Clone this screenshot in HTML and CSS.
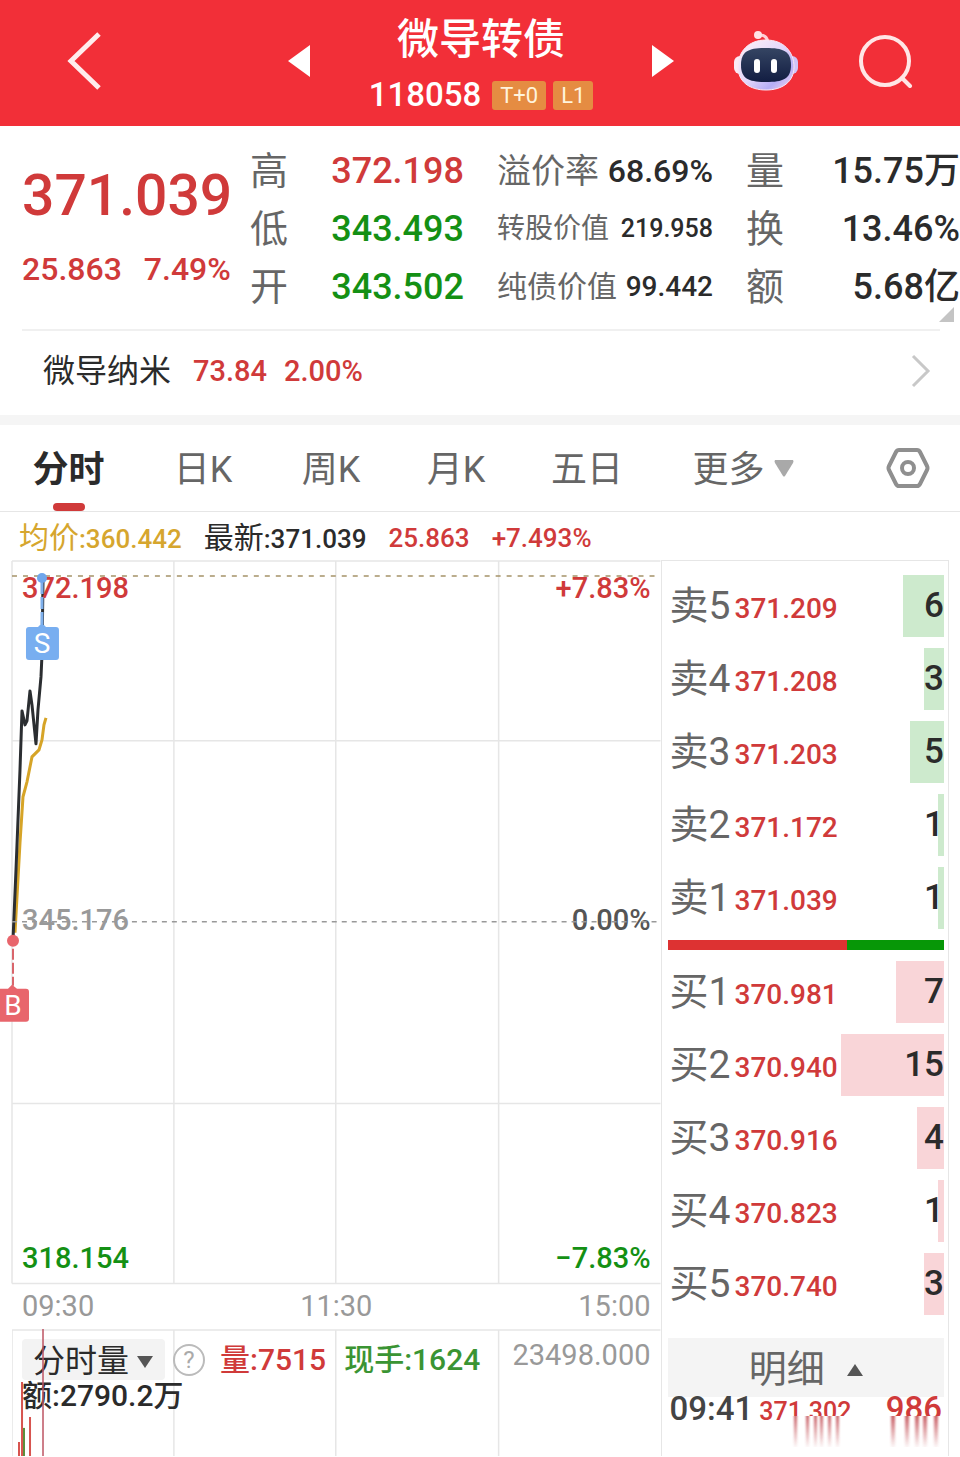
FILE: index.html
```
<!DOCTYPE html>
<html lang="zh-CN">
<head>
  <meta charset="UTF-8" />
  <meta name="viewport" content="width=device-width, initial-scale=1.0"/>
  <title>微导转债 118058</title>
  <link rel="stylesheet" href="styles.css">
</head>
<body>
  <header class="topbar">
    <button class="icon-btn" aria-label="返回">
      <svg width="34" height="60" viewBox="0 0 34 60"><path d="M32 3L4 30L32 57" fill="none" stroke="#ffeded" stroke-width="5"/></svg>
    </button>
    <button class="icon-btn prev" aria-label="上一只">
      <svg width="22" height="32" viewBox="0 0 22 32"><path d="M22 0V32L0 16Z" fill="#fff"/></svg>
    </button>
    <div class="title">
      <h1>微导转债</h1>
      <div class="code">118058 <span class="badge">T+0</span><span class="badge">L1</span></div>
    </div>
    <button class="icon-btn next" aria-label="下一只">
      <svg width="22" height="32" viewBox="0 0 22 32"><path d="M0 0V32L22 16Z" fill="#fff"/></svg>
    </button>
    <button class="icon-btn" aria-label="智能助手">
      <svg width="66" height="62" viewBox="0 0 66 62">
        <defs>
          <linearGradient id="helmet" x1="0" y1="0" x2="1" y2="1">
            <stop offset="0" stop-color="#fff3f6"/>
            <stop offset=".5" stop-color="#e2d5fb"/>
            <stop offset=".75" stop-color="#b5adf5"/>
            <stop offset="1" stop-color="#fbdcee"/>
          </linearGradient>
          <linearGradient id="visor" x1="0" y1="0" x2="0" y2="1">
            <stop offset="0" stop-color="#354563"/>
            <stop offset="1" stop-color="#121d42"/>
          </linearGradient>
        </defs>
        <path d="M25 5Q34 4 35 13" fill="none" stroke="#ffd0d6" stroke-width="3"/>
        <circle cx="25" cy="5" r="4" fill="#ffe3e6"/>
        <rect x="1" y="26" width="12" height="18" rx="6" fill="#fbe9f4"/>
        <rect x="53" y="26" width="12" height="18" rx="6" fill="#cfc4f8"/>
        <path d="M33 10C51 10 61 22 61 37C61 52 49 60 33 60C17 60 5 52 5 37C5 22 15 10 33 10Z" fill="url(#helmet)" stroke="#fbe6f2" stroke-width="1"/>
        <path d="M33 18C50 18 58 21 58 35C58 49 50 52 33 52C16 52 8 49 8 35C8 21 16 18 33 18Z" fill="url(#visor)"/>
        <rect x="21" y="29" width="6" height="14" rx="3" fill="#fff"/>
        <rect x="38" y="29" width="6" height="14" rx="3" fill="#fff"/>
      </svg>
    </button>
    <button class="icon-btn" aria-label="搜索">
      <svg width="54" height="54" viewBox="0 0 54 54"><g fill="none" stroke="#ffe6e6" stroke-width="4" stroke-linecap="round"><circle cx="26" cy="27" r="24"/><path d="M43 44L51 52"/></g></svg>
    </button>
  </header>

  <section class="summary">
    <div class="last">
      <div class="price">371.039</div>
      <div class="change"><span>25.863</span><span>7.49%</span></div>
    </div>
    <dl class="stats">
      <div><dt>高</dt><dd class="red">372.198</dd></div>
      <div><dt>低</dt><dd class="green">343.493</dd></div>
      <div><dt>开</dt><dd class="green">343.502</dd></div>
    </dl>
    <dl class="stats bond">
      <div class="lg"><dt>溢价率</dt><dd>68.69%</dd></div>
      <div class="sm"><dt>转股价值</dt><dd>219.958</dd></div>
      <div class="md"><dt>纯债价值</dt><dd>99.442</dd></div>
    </dl>
    <dl class="stats">
      <div><dt>量</dt><dd>15.75万</dd></div>
      <div><dt>换</dt><dd>13.46%</dd></div>
      <div><dt>额</dt><dd>5.68亿</dd></div>
    </dl>
    <svg class="corner" width="15" height="15" viewBox="0 0 15 15"><path d="M15 0V15H0Z" fill="#c4c4c4"/></svg>
  </section>

  <a class="stock" href="#">
    <span class="stock-name">微导纳米</span>
    <span class="red">73.84</span>
    <span class="red">2.00%</span>
    <svg class="arrow" width="20" height="34" viewBox="0 0 20 34"><path d="M2 2L17 17L2 32" fill="none" stroke="#c8c8c8" stroke-width="3"/></svg>
  </a>

  <nav class="tabs">
    <button class="tab active">分时</button>
    <button class="tab">日K</button>
    <button class="tab">周K</button>
    <button class="tab">月K</button>
    <button class="tab">五日</button>
    <button class="tab">更多 <svg width="20" height="17" viewBox="0 0 20 17"><path d="M1 0H19Q20 1 19 3L11 16Q10 17 9 16L1 3Q0 1 1 0Z" fill="#a9a9a9"/></svg></button>
    <button class="tab setting" aria-label="设置">
      <svg width="44" height="42" viewBox="0 0 44 42"><g fill="none" stroke="#8f8f8f" stroke-width="4"><path d="M13 3H31Q33 3 34 5L41 19Q42 21 41 23L34 37Q33 39 31 39H13Q11 39 10 37L3 23Q2 21 3 19L10 5Q11 3 13 3Z"/><circle cx="22" cy="21" r="6"/></g></svg>
    </button>
  </nav>

  <div class="info">
    <span class="gold"><b>均价</b>:360.442</span>
    <span><b>最新</b>:371.039</span>
    <span class="red">25.863</span>
    <span class="red">+7.493%</span>
  </div>

  <main class="board">
    <div class="charts">
      <div class="chart">
        <svg class="plot" viewBox="0 0 649 725">
          <g fill="none" stroke="#e6e6e6" stroke-width="1.5">
            <path d="M0 1H649M0 181H649M0 544H649M0 724H649"/>
            <path d="M0 1V724M162 1V724M324 1V724M487 1V724"/>
          </g>
          <path d="M3 373L8 283L11 237L15 222L20 197L27 190L30 180L32 165L34 158" fill="none" stroke="#d6a427" stroke-width="3"/>
          <path d="M1 380L4 310L8 210L10 151L13 165L15 161L18 131L20 145L24 184L26 150L29 117L30 95L31 22" fill="none" stroke="#2b2e31" stroke-width="3" stroke-linejoin="round"/>
        </svg>
        <span class="mark top-left red">372.198</span>
        <span class="mark top-right red">+7.83%</span>
        <span class="mark mid-left">345.176</span>
        <span class="mark mid-right">0.00%</span>
        <span class="mark bottom-left green">318.154</span>
        <span class="mark bottom-right green">−7.83%</span>
        <svg class="plot over" viewBox="0 0 649 725">
          <path d="M0 16H649" stroke="#a59368" stroke-width="1.5" stroke-dasharray="5 6"/>
          <path d="M0 362H649" stroke="#999" stroke-width="1.5" stroke-dasharray="5 5"/>
          <path d="M30 22V64" stroke="#7fb0ec" stroke-width="3" stroke-dasharray="12 3"/>
          <circle cx="30" cy="18" r="5" fill="#6ea6ec"/>
          <path d="M26 67L30 63L34 67H44Q47 67 47 70V97Q47 100 44 100H17Q14 100 14 97V70Q14 67 17 67Z" fill="#78aef0"/>
          <text class="flag" x="30" y="93">S</text>
          <path d="M1 389V426" stroke="#d9656b" stroke-width="2" stroke-dasharray="11 3"/>
          <circle cx="1" cy="381" r="6" fill="#e8656c"/>
          <path d="M-4 429L0 425L5 429H14Q17 429 17 432V459Q17 462 14 462H-12V429Z" fill="#e8656c"/>
          <text class="flag" x="1" y="455">B</text>
        </svg>
      </div>
      <div class="axis"><span>09:30</span><span>11:30</span><span>15:00</span></div>
      <div class="volume">
        <svg class="vol-plot" viewBox="0 0 649 129">
          <path d="M0 1H649M0 1V129M162 1V129M324 1V129M487 1V129" fill="none" stroke="#e6e6e6" stroke-width="1.5"/>
          <path d="M10 53V129M18 88V129M7 113V129" stroke="#d7544f" stroke-width="2"/>
          <path d="M12 99V129" stroke="#5b8f3d" stroke-width="2"/>
        </svg>
        <div class="vol-head">
          <button class="picker">分时量 <svg width="18" height="12" viewBox="0 0 18 12"><path d="M1 0H17L9 12Z" fill="#555"/></svg></button>
          <button class="help" aria-label="说明">?</button>
          <span class="red">量:7515</span>
          <span class="deal">现手:1624</span>
          <span class="max">23498.000</span>
        </div>
        <div class="amount">额:2790.2万</div>
        <svg class="vol-plot" viewBox="0 0 649 129"><path d="M31 0V129" stroke="#bd5463" stroke-width="1.5"/></svg>
      </div>
    </div>

    <aside class="depth">
      <table class="book sell">
        <tr><th>卖5</th><td>371.209</td><td class="qty"><span style="width: 41px">6</span></td></tr>
        <tr><th>卖4</th><td>371.208</td><td class="qty"><span style="width: 20px">3</span></td></tr>
        <tr><th>卖3</th><td>371.203</td><td class="qty"><span style="width: 34px">5</span></td></tr>
        <tr><th>卖2</th><td>371.172</td><td class="qty"><span style="width: 6px">1</span></td></tr>
        <tr><th>卖1</th><td>371.039</td><td class="qty"><span style="width: 6px">1</span></td></tr>
      </table>
      <div class="ratio"><div class="ratio-buy" style="width: 65%"></div></div>
      <table class="book buy">
        <tr><th>买1</th><td>370.981</td><td class="qty"><span style="width: 48px">7</span></td></tr>
        <tr><th>买2</th><td>370.940</td><td class="qty"><span style="width: 103px">15</span></td></tr>
        <tr><th>买3</th><td>370.916</td><td class="qty"><span style="width: 27px">4</span></td></tr>
        <tr><th>买4</th><td>370.823</td><td class="qty"><span style="width: 6px">1</span></td></tr>
        <tr><th>买5</th><td>370.740</td><td class="qty"><span style="width: 20px">3</span></td></tr>
      </table>
      <button class="detail">明细 <svg width="16" height="12" viewBox="0 0 16 12"><path d="M0 12H16L8 0Z" fill="#555"/></svg></button>
      <div class="tape">
        <span class="time">09:41</span><span class="deal-price">371.302</span><span class="deal-qty">986</span>
        <svg class="fade" width="158" height="38" viewBox="0 0 158 38">
          <defs>
            <linearGradient id="drip" x1="0" y1="0" x2="0" y2="1"><stop offset="0" stop-color="#c34f55" stop-opacity=".9"/><stop offset="1" stop-color="#c34f55" stop-opacity=".05"/></linearGradient>
            <filter id="soft"><feGaussianBlur stdDeviation="1 0"/></filter>
          </defs>
          <rect width="158" height="38" fill="#fff"/>
          <g fill="url(#drip)" filter="url(#soft)">
            <rect x="8" y="0" width="3" height="31"/><rect x="20" y="0" width="3" height="31"/><rect x="28" y="0" width="3" height="31"/><rect x="34" y="0" width="3" height="31"/><rect x="42" y="0" width="3" height="31"/><rect x="50" y="0" width="3" height="31"/>
            <rect x="105" y="0" width="4" height="31"/><rect x="119" y="0" width="4" height="31"/><rect x="129" y="0" width="4" height="31"/><rect x="137" y="0" width="4" height="31"/><rect x="148" y="0" width="4" height="31"/>
          </g>
        </svg>
      </div>
    </aside>
  </main>
</body>
</html>
```
FILE: styles.css
```
:root {
  --red: #d03a3a;
  --green: #149014;
  --dark: #2b2b2b;
  --gray: #666;
  --line: #e6e6e6;
}

* {
  box-sizing: border-box;
}

body {
  font-family: Roboto, "Noto Sans CJK SC", sans-serif;
  margin: 0;
  line-height: 1.2;
  color: var(--dark);
  background: #fff;
  overflow-x: hidden;
}

button {
  font-family: inherit;
  line-height: inherit;
  color: inherit;
  border: none;
  background: none;
  padding: 0;
  cursor: pointer;
}

svg {
  display: block;
}

.red { color: var(--red); }
.green { color: var(--green); }
.gold { color: #d6a62e; }

/* header */
.topbar {
  display: grid;
  grid-template-columns: 168fr 142fr 342fr 54fr 120fr 120fr;
  align-items: center;
  justify-items: center;
  height: 126px;
  padding: 0 14px 4px 0;
  background: #f22f38;
  color: #fff;
}

.icon-btn.prev { justify-self: end; }
.icon-btn.next { justify-self: start; }

.title {
  padding-top: 8px;
  text-align: center;
}

.title h1 {
  margin: 0;
  font-size: 42px;
  font-weight: 500;
  line-height: 60px;
}

.code {
  display: flex;
  align-items: center;
  justify-content: center;
  gap: 7px;
  font-size: 33px;
  font-weight: 500;
  line-height: 50px;
}

.badge {
  padding: 0 8px;
  font-size: 22px;
  font-weight: 400;
  line-height: 29px;
  border-radius: 3px;
  background: #e58c42;
  color: #fff3dc;
}

.badge:first-of-type {
  margin-left: 4px;
}

/* summary */
.summary {
  position: relative;
  display: grid;
  grid-template-columns: minmax(0, 195fr) minmax(0, 214fr) minmax(0, 216fr) minmax(0, 214fr);
  column-gap: 33px;
  height: 205px;
  padding: 16px 0 0 22px;
  font-weight: 500;
}

.summary::after {
  content: "";
  position: absolute;
  left: 22px;
  right: 20px;
  bottom: 0;
  border-bottom: 2px solid #f0f0f0;
}

.last {
  color: var(--red);
  white-space: nowrap;
}

.price {
  padding-top: 19px;
  font-size: 57px;
  line-height: 70px;
}

.change {
  display: flex;
  gap: 22px;
  padding-top: 18px;
  font-size: 32px;
  line-height: 40px;
}

.stats {
  margin: 0;
  font-size: 36px;
  line-height: 58px;
  white-space: nowrap;
}

.stats div {
  display: flex;
  justify-content: space-between;
  height: 58px;
}

.stats dt {
  font-size: 38px;
  font-weight: 400;
  color: var(--gray);
}

.stats dd {
  margin: 0;
}

.lg dt { font-size: 34px; }
.md dt { font-size: 30px; }
.sm dt { font-size: 28px; }
.lg dd { font-size: 32px; }
.md dd { font-size: 28px; }
.sm dd { font-size: 25px; }

.corner {
  position: absolute;
  right: 6px;
  bottom: 9px;
}

.stock {
  display: flex;
  align-items: center;
  gap: 17px;
  height: 94px;
  padding: 0 29px 4px 43px;
  border-bottom: 10px solid #f5f5f5;
  font-size: 29px;
  font-weight: 500;
  color: var(--dark);
  text-decoration: none;
}

.stock-name {
  margin-right: 5px;
  font-size: 32px;
  font-weight: 400;
}

.arrow {
  margin-left: auto;
}

/* tabs */
.tabs {
  display: grid;
  grid-template-columns: 137fr 132fr 124fr 126fr 136fr 176fr 129fr;
  height: 87px;
  border-bottom: 1px solid var(--line);
}

.tab {
  position: relative;
  display: flex;
  align-items: center;
  justify-content: center;
  gap: 9px;
  padding-top: 6px;
  font-size: 36px;
  color: var(--gray);
}

.tab svg {
  margin-bottom: 6px;
}

.tab.active {
  font-weight: 700;
  color: var(--dark);
}

.tab.active::after {
  content: "";
  position: absolute;
  left: 50%;
  bottom: 0;
  width: 32px;
  height: 8px;
  margin-left: -16px;
  border-radius: 4px;
  background: var(--red);
}

.tab.setting {
  padding-left: 24px;
}

.info {
  display: flex;
  gap: 22px;
  padding-left: 19px;
  height: 48px;
  font-size: 26px;
  font-weight: 500;
  line-height: 52px;
  white-space: nowrap;
}

.info b {
  font-size: 30px;
  font-weight: 400;
}

/* chart area */
.board {
  display: flex;
  padding-right: 11px;
}

.charts {
  flex: 1;
  min-width: 0;
  padding-left: 12px;
}

.chart {
  position: relative;
}

.plot,
.vol-plot {
  width: 100%;
  overflow: visible;
}

.plot.over {
  position: absolute;
  left: 0;
  top: 0;
}

.flag {
  font-size: 28px;
  fill: #fff;
  text-anchor: middle;
}

.mark {
  position: absolute;
  font-size: 29px;
  font-weight: 500;
  line-height: 36px;
}

.top-left { left: 10px; top: 10px; }
.top-right { right: 10px; top: 10px; }
.mid-left { left: 10px; top: 342px; color: #999; }
.mid-right { right: 10px; top: 342px; color: #555; }
.bottom-left { left: 10px; bottom: 8px; }
.bottom-right { right: 10px; bottom: 8px; }

.axis {
  display: flex;
  justify-content: space-between;
  padding: 0 10px;
  font-size: 29px;
  line-height: 45px;
  color: #999;
}

.volume {
  position: relative;
  height: 127px;
  overflow: hidden;
  font-size: 30px;
  font-weight: 500;
}

.vol-plot {
  position: absolute;
  left: 0;
  top: 0;
}

.vol-head {
  position: relative;
  display: flex;
  align-items: center;
  height: 51px;
  padding: 10px 10px 0;
  line-height: 41px;
  white-space: nowrap;
}

.picker {
  display: flex;
  align-items: center;
  gap: 7px;
  height: 41px;
  padding: 4px 11px 0;
  font-size: 32px;
  border-radius: 4px;
  background: #f3f3f3;
}

.help {
  width: 32px;
  height: 32px;
  margin: 0 15px 0 8px;
  font-size: 24px;
  line-height: 28px;
  border: 2px solid #bbb;
  border-radius: 50%;
  color: #aaa;
}

.deal {
  margin-left: 18px;
  color: #3a9433;
}

.max {
  margin-left: auto;
  padding-bottom: 8px;
  font-size: 29px;
  font-weight: 400;
  color: #999;
}

.amount {
  position: relative;
  padding-left: 10px;
  line-height: 32px;
}

/* order book */
.depth {
  width: 30.4%;
  padding: 8px 4px 0 6px;
  border: 1px solid var(--line);
  border-bottom: none;
}

.book {
  width: 100%;
  border-collapse: collapse;
}

.book tr {
  height: 73px;
}

.book th,
.book td {
  padding: 0;
  text-align: left;
  vertical-align: middle;
}

.book th {
  width: 67px;
  padding-left: 2px;
  font-size: 39px;
  font-weight: 400;
  line-height: 62px;
  color: var(--gray);
}

.book td {
  padding-top: 6px;
  font-size: 28px;
  font-weight: 500;
  color: var(--red);
}

.book .qty {
  padding: 0;
  font-size: 35px;
  color: var(--dark);
}

.qty span {
  display: flex;
  justify-content: flex-end;
  margin-left: auto;
  line-height: 62px;
}

.sell .qty span { background: #cdeacd; }
.buy .qty span { background: #f9d5d8; }

.ratio {
  height: 10px;
  margin: 6px 0 5px;
  background: #079707;
}

.ratio-buy {
  height: 10px;
  background: #dd3232;
}

.detail {
  display: flex;
  align-items: center;
  justify-content: center;
  gap: 22px;
  width: 100%;
  height: 59px;
  margin-top: 18px;
  padding-top: 4px;
  font-size: 38px;
  background: #f4f4f4;
  color: var(--gray);
}

.tape {
  position: relative;
  display: flex;
  align-items: baseline;
  height: 58px;
  padding: 0 2px;
  font-weight: 500;
  line-height: 24px;
  color: var(--red);
}

.time {
  font-size: 33px;
  color: #444;
}

.deal-price {
  padding-left: 6px;
  font-size: 25px;
}

.deal-qty {
  margin-left: auto;
  font-size: 33px;
}

.fade {
  position: absolute;
  right: 0;
  top: 19px;
}
```
